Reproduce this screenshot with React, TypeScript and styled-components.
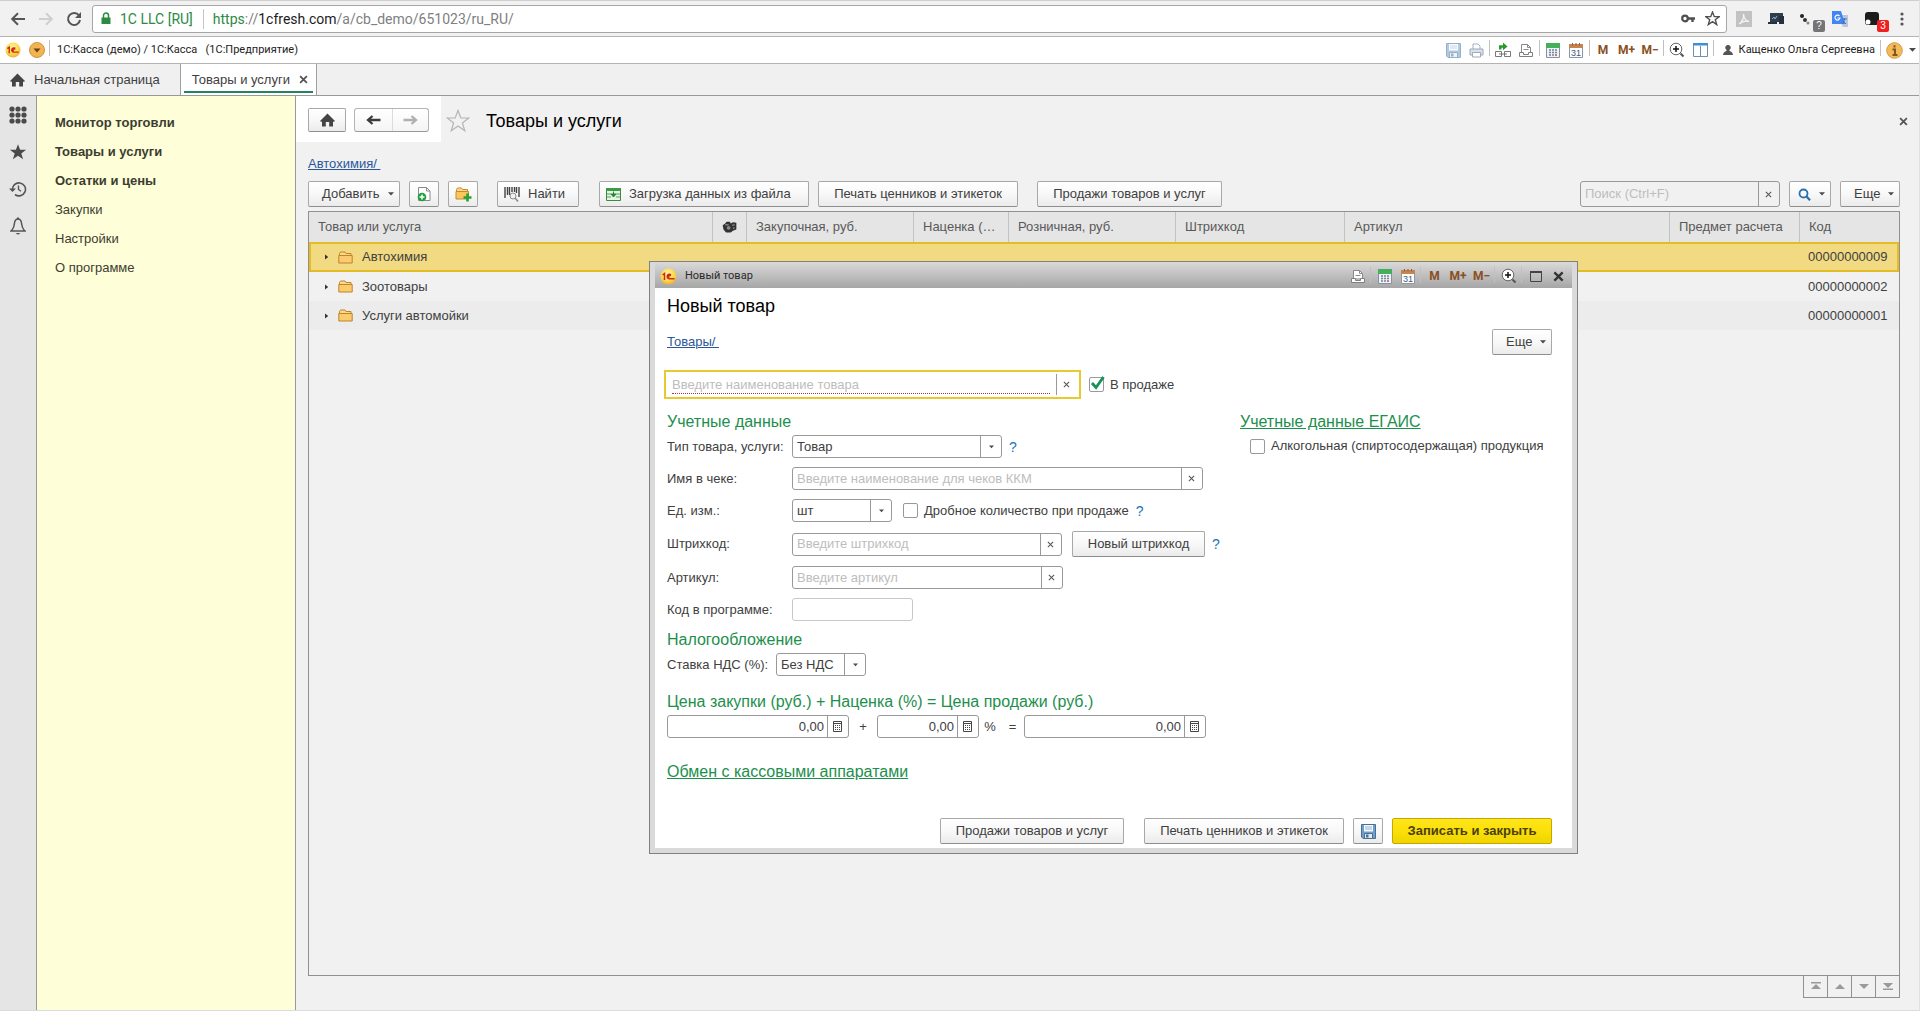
import React from "react";
import styled, { createGlobalStyle, css } from "styled-components";

const Global = createGlobalStyle`
  *, *::before, *::after { box-sizing: border-box; }
  body { margin: 0; background: #f1f1f1; font-family: "Liberation Sans", Arial, sans-serif; font-size: 13px; line-height: 16px; color: #404040; }
  button, input, select { font: inherit; color: inherit; margin: 0; }
  h1, h2 { margin: 0; font-weight: normal; }
  svg { display: block; flex: none; }
`;

/* ---------- page frame ---------- */

const Page = styled.div`
  min-height: 100vh;
  display: flex;
  flex-direction: column;
  border-right: 1px solid #e0e0e0;
  border-bottom: 1px solid #dcdcdc;
`;

const BrowserBar = styled.div`
  display: flex;
  align-items: center;
  height: 37px;
  background: #f1f1f1;
  border-top: 1px solid #cfcfcf;
  border-bottom: 1px solid #b4b4b4;
  padding-left: 4px;
`;

const PlainButton = styled.button<{ $w?: number; $h?: number }>`
  display: flex;
  align-items: center;
  justify-content: center;
  flex: none;
  position: relative;
  width: ${(p) => p.$w ?? 23}px;
  height: ${(p) => p.$h ?? 24}px;
  padding: 0;
  border: 0;
  background: transparent;
`;

const AddressBar = styled.div`
  flex: 1;
  display: flex;
  align-items: center;
  height: 28px;
  margin-left: 4px;
  padding: 0 1px 0 8px;
  background: #fff;
  border: 1px solid #a6a6a6;
  border-radius: 3px;
  font-family: Roboto, "Noto Sans", sans-serif;
  font-size: 14px;
  line-height: 20px;
`;

const Issuer = styled.span`
  color: #2c8a43;
  padding: 0 10px 0 9px;
  border-right: 1px solid #c4c4c4;
  margin-right: 9px;
`;

const Address = styled.span`
  flex: 1;
  color: #808080;
  b { font-weight: normal; color: #1c1c1c; }
  i { font-style: normal; color: #2c8a43; }
`;

const Extensions = styled.div`
  display: flex;
  margin: 0 3px 0 1px;
`;

const CountBadge = styled.span<{ $bg: string }>`
  position: absolute;
  right: -1px;
  bottom: -1px;
  width: 12px;
  height: 12px;
  border-radius: 2px;
  background: ${(p) => p.$bg};
  color: #fff;
  font-size: 10px;
  line-height: 12px;
  text-align: center;
`;

const AppBar = styled.div`
  display: flex;
  align-items: center;
  height: 27px;
  background: #fff;
  border-bottom: 1px solid #b4b4b4;
  font-family: Roboto, "Noto Sans", sans-serif;
  font-size: 11px;
  color: #222;
`;

const AppName = styled.span`
  flex: 1;
  white-space: pre;
`;

const Separator = styled.span<{ $after?: number }>`
  flex: none;
  align-self: flex-start;
  width: 1px;
  height: 16px;
  margin: 3px ${(p) => p.$after ?? 2}px 0 1px;
  background: #c0c0c0;
`;

const UserButton = styled(PlainButton)`
  width: auto;
  gap: 6px;
  padding: 0 4px 0 7px;
`;

const MemoryLabel = styled.span`
  font-family: Roboto, sans-serif;
  font-weight: 700;
  font-size: 12px;
  line-height: 16px;
  color: #8a4f22;
`;

const TabBar = styled.nav`
  display: flex;
  height: 32px;
  border-bottom: 1px solid #999;
  background: #f0f0f0;
`;

const Tab = styled.button<{ $active?: boolean }>`
  display: flex;
  align-items: center;
  height: 31px;
  border: 0;
  border-right: 1px solid #a0a0a0;
  gap: 9px;
  padding: 0 20px 0 10px;
  background: ${(p) => (p.$active ? "#fff" : "transparent")};
  ${(p) =>
    p.$active &&
    css`
      gap: 9px;
      padding: 0 8px 0 11px;
      box-shadow: inset 3px 0 #fff, inset -3px 0 #fff, inset 0 -2px #fff, inset 0 -4px #23835a;
    `}
`;

const Body = styled.div`
  flex: 1;
  display: flex;
`;

const IconRail = styled.nav`
  width: 37px;
  display: flex;
  flex-direction: column;
  align-items: center;
  gap: 13px;
  padding-top: 7px;
  background: #e5e5e5;
  border-right: 1px solid #999;
`;

const Menu = styled.nav`
  width: 259px;
  padding: 12px 18px;
  background: #feffd8;
  border-right: 1px solid #999;
`;

const MenuLink = styled.a<{ $strong?: boolean }>`
  display: block;
  line-height: 29px;
  color: #3c3c30;
  text-decoration: none;
  font-weight: ${(p) => (p.$strong ? 700 : 400)};
`;

/* ---------- goods list ---------- */

const Main = styled.main`
  position: relative;
  flex: 1;
  min-width: 0;
  display: flex;
  flex-direction: column;
  background: #f1f1f1;
`;

const PageHead = styled.header`
  display: flex;
  align-items: center;
  height: 50px;
  padding-right: 4px;
`;

const NavBlock = styled.div`
  display: flex;
  gap: 8px;
  align-self: flex-start;
  height: 46px;
  padding: 12px 12px 0;
  background: #fff;
`;

const Button = styled.button<{ $w?: number; $h?: number; $primary?: boolean; $menu?: boolean; $start?: boolean; $inset?: number }>`
  display: flex;
  align-items: center;
  justify-content: ${(p) => (p.$menu ? "space-between" : p.$start ? "flex-start" : "center")};
  gap: ${(p) => (p.$menu ? 2 : 8)}px;
  flex: none;
  width: ${(p) => (p.$w ? p.$w + "px" : "auto")};
  height: ${(p) => p.$h ?? 26}px;
  padding: 0 ${(p) => (p.$menu ? 5 : 4)}px 0 ${(p) => p.$inset ?? (p.$menu ? 13 : p.$start ? 6 : 4)}px;
  white-space: nowrap;
  border: 1px solid #a8a8a8;
  border-bottom-color: #8e8e8e;
  border-radius: 2px;
  background: linear-gradient(#fff, #f8f8f8 50%, #ebebeb);
  ${(p) =>
    p.$primary &&
    css`
      font-weight: 700;
      color: #4a4010;
      border-color: #c4a800;
      background: linear-gradient(#ffe51c, #fbdf08 50%, #f0d400);
    `}
`;

const NavPair = styled.div`
  display: flex;
  height: 24px;
  border: 1px solid #b4b4b4;
  border-bottom-color: #999;
  border-radius: 3px;
  background: linear-gradient(#fff, #f4f4f4);
  button + button { border-left: 1px solid #dcdcdc; }
`;

const Title = styled.h1`
  flex: 1;
  font-size: 18px;
  line-height: 24px;
  color: #000;
`;

const PathLink = styled.a`
  color: #2b579a;
  text-decoration: underline;
  white-space: pre;
`;

const PathRow = styled.div`
  padding: 10px 12px 9px;
`;

const Toolbar = styled.div`
  display: flex;
  align-items: center;
  gap: 9px;
  padding: 0 19px 4px 12px;
`;

const Gap = styled.span<{ $w?: number }>`
  flex: ${(p) => (p.$w ? "none" : 1)};
  width: ${(p) => p.$w ?? 0}px;
`;

const ListFrame = styled.div`
  flex: 1;
  margin: 0 19px 0 12px;
  border: 1px solid #909090;
`;

const Table = styled.table`
  width: 100%;
  table-layout: fixed;
  border-collapse: separate;
  border-spacing: 0;
`;

const Th = styled.th`
  height: 30px;
  padding: 0 9px;
  font-weight: 400;
  text-align: left;
  color: #595959;
  background: #e5e5e5;
  white-space: nowrap;
  overflow: hidden;
  text-overflow: ellipsis;
  border-right: 1px solid #c2c2c2;
  &:last-child { border-right: 0; }
`;

const Tr = styled.tr<{ $selected?: boolean; $shade?: boolean }>`
  td {
    height: 29px;
    padding: 0 8px;
    white-space: nowrap;
    background: ${(p) => (p.$shade ? "#ececec" : "#f1f1f1")};
    ${(p) =>
      p.$selected &&
      css`
        height: 30px;
        background: #f2da82;
        border-top: 2px solid #e3bc26;
        border-bottom: 2px solid #e3bc26;
        &:first-child { border-left: 2px solid #e3bc26; padding-left: 6px; }
        &:last-child { border-right: 2px solid #e3bc26; }
      `}
  }
`;

const NameCell = styled.span`
  display: flex;
  align-items: center;
  gap: 9px;
  padding-left: 8px;
`;

const ListFoot = styled.footer`
  display: flex;
  justify-content: flex-end;
  padding: 0 19px 12px 0;
`;

const PageButton = styled.button`
  display: grid;
  place-items: center;
  width: 24px;
  height: 22px;
  padding: 0;
  background: #f1f1f1;
  border: 1px solid #909090;
  border-top: 0;
  border-right: 0;
  &:last-child { width: 25px; border-right: 1px solid #909090; }
`;

/* ---------- form fields ---------- */

const Field = styled.div<{ $w: number; $h?: number; $plain?: boolean; $clear?: boolean }>`
  display: flex;
  flex: none;
  width: ${(p) => p.$w}px;
  height: ${(p) => p.$h ?? 23}px;
  border: 1px solid ${(p) => (p.$plain ? "#c8c8c8" : "#999")};
  border-radius: 3px;
  background: ${(p) => (p.$clear ? "transparent" : "#fff")};
`;

const TextInput = styled.input<{ $right?: boolean }>`
  flex: 1;
  min-width: 0;
  width: 100%;
  padding: 0 3px 0 4px;
  border: 0;
  outline: 0;
  background: transparent;
  text-align: ${(p) => (p.$right ? "right" : "left")};
  &::placeholder { color: #bdbdbd; opacity: 1; }
`;

const FieldButton = styled.button`
  display: grid;
  place-items: center;
  flex: none;
  width: 21px;
  padding: 0 1px 0 0;
  border: 0;
  border-left: 1px solid #999;
  background: transparent;
`;

const NameField = styled.div`
  display: flex;
  align-items: center;
  width: 417px;
  height: 29px;
  padding: 0 2px 0 6px;
  border: 2px solid #e8c92e;
  background: #fff;
  input { height: 18px; padding: 0; margin-right: 6px; border-bottom: 1px dotted #b0304a; }
  button { height: 21px; }
`;

const SelectBox = styled.span<{ $w: number }>`
  display: grid;
  flex: none;
  width: ${(p) => p.$w}px;
  height: 23px;
  border: 1px solid #999;
  border-radius: 3px;
  background: #fff;
  > * { grid-area: 1 / 1; }
`;

const Select = styled.select`
  appearance: none;
  width: 100%;
  height: 21px;
  padding: 0 22px 0 4px;
  border: 0;
  outline: 0;
  background: transparent;
`;

const SelectArrow = styled.span`
  justify-self: end;
  display: grid;
  place-items: center;
  width: 21px;
  border-left: 1px solid #999;
  pointer-events: none;
`;

const CheckLabel = styled.label`
  display: flex;
  align-items: center;
  gap: 6px;
`;

const CheckWrap = styled.span`
  display: grid;
  width: 15px;
  height: 15px;
  > * { grid-area: 1 / 1; }
  svg { display: none; pointer-events: none; overflow: visible; }
  input:checked + svg { display: block; }
`;

const CheckInput = styled.input`
  appearance: none;
  width: 15px;
  height: 15px;
  border: 1px solid #999;
  border-radius: 2px;
  background: #fff;
`;

/* ---------- dialog window ---------- */

const Window = styled.section`
  position: absolute;
  left: 353px;
  top: 165px;
  width: 929px;
  border: 1px solid #808080;
  padding: 0 5px 5px;
  background: #dadada;
`;

const WindowBar = styled.header`
  display: flex;
  align-items: center;
  height: 26px;
  padding: 2px 2px 0 5px;
  background: linear-gradient(#dadada, #cacaca 30%, #a6a6a6);
  font-family: Roboto, "Noto Sans", sans-serif;
  font-size: 11px;
  color: #2a2a2a;
`;

const WindowName = styled.span`
  flex: 1;
  padding-left: 8px;
`;

const WindowBody = styled.div`
  padding: 6px 20px 4px 12px;
  background: #fff;
`;

const Between = styled.div`
  display: flex;
  justify-content: space-between;
  align-items: center;
  margin: 11px 0 15px;
`;

const NameRow = styled.div`
  display: flex;
  align-items: center;
  gap: 8px;
  margin: 0 0 13px -3px;
`;

const Columns = styled.div`
  display: flex;
  justify-content: space-between;
  align-items: flex-start;
`;

const SideColumn = styled.div`
  width: 312px;
`;

const Heading = styled.h2<{ $top?: number }>`
  margin: ${(p) => p.$top ?? 0}px 0 3px;
  font-size: 16px;
  line-height: 20px;
  color: #1d8f4d;
  a { color: inherit; }
`;

const FormRows = styled.div`
  display: flex;
  flex-direction: column;
  gap: 9px;
`;

const Row = styled.div`
  display: flex;
  align-items: center;
`;

const RowLabel = styled.label<{ $w?: number }>`
  flex: none;
  width: ${(p) => p.$w ?? 125}px;
`;

const Help = styled.a`
  margin-left: 7px;
  color: #1e73b8;
  text-decoration: none;
  font-size: 14px;
`;

const Sign = styled.span<{ $w: number }>`
  width: ${(p) => p.$w}px;
  text-align: center;
`;

const Indent = styled.div`
  padding: 3px 0 0 10px;
`;

const WindowActions = styled.footer`
  display: flex;
  justify-content: flex-end;
  gap: 9px;
  margin-top: 36px;
`;

/* ---------- drawings ---------- */

const Logo = ({ size = 17 }: { size?: number }) => (
  <svg width={size} height={size} viewBox="0 0 17 17" aria-hidden>
    <defs>
      <radialGradient id="sun" cx="45%" cy="35%" r="65%">
        <stop offset="0" stopColor="#fff8b0" />
        <stop offset=".6" stopColor="#fcdc4e" />
        <stop offset="1" stopColor="#eeb03a" />
      </radialGradient>
    </defs>
    <circle cx="8.500" cy="8.500" r="8" fill="url(#sun)" />
    <path d="M2.500 7l2-1.500v6.500M11 6.800a2.300 2.300 0 1 0-1.800 4H14.500M10.500 8.200a1 1 0 1 0-1 1" fill="none" stroke="#cf2a14" strokeWidth="1.500" />
  </svg>
);

const Caret = ({ size = 6 }: { size?: number }) => (
  <svg width={size} height="4" viewBox="0 0 7 4" aria-hidden><path d="M0 0h7L3.500 3.800z" fill="#4a4a4a" /></svg>
);

const Cross = ({ size = 7, w = 1.2, color = "#555" }: { size?: number; w?: number; color?: string }) => (
  <svg width={size} height={size} viewBox="0 0 8 8" aria-hidden><path d="M1 1l6 6M7 1L1 7" stroke={color} strokeWidth={w} /></svg>
);

const House = () => (
  <svg width="15" height="14" viewBox="0 0 15 14" aria-hidden><path d="M7.500.5L15 8l-1.200 1L13 8.300V13.500H9.200V9H5.800v4.500H2V8.300L1.200 9 0 8z" fill="#444" /></svg>
);

const Arrow = ({ flip, color }: { flip?: boolean; color: string }) => (
  <svg width="16" height="14" viewBox="0 0 16 14" aria-hidden>
    <g transform={flip ? "matrix(-1 0 0 1 16 0)" : undefined}>
      <path d="M15 7H2.500M8 1.300L2.200 7 8 12.700" fill="none" stroke={color} strokeWidth="2" />
    </g>
  </svg>
);

const NavArrow = ({ flip, color }: { flip?: boolean; color: string }) => (
  <svg width="15" height="10" viewBox="0 0 15 10" aria-hidden>
    <g transform={flip ? "matrix(-1 0 0 1 15 0)" : undefined}>
      <path d="M14.500 5H2.500M6.500 1L2 5l4.500 4" fill="none" stroke={color} strokeWidth="2.300" />
    </g>
  </svg>
);

const Star = ({ size, fill = "none", stroke = "none", w = 1 }: { size: number; fill?: string; stroke?: string; w?: number }) => (
  <svg width={size} height={size} viewBox="0 0 24 24" aria-hidden>
    <path d="M12 1.500l2.800 7.500h8l-6.400 4.900 2.400 7.900-6.800-4.800-6.800 4.800 2.400-7.900L1.200 9h8z" fill={fill} stroke={stroke} strokeWidth={w} />
  </svg>
);

const Disk = ({ faded }: { faded?: boolean }) => (
  <svg width="15" height="15" viewBox="0 0 15 15" opacity={faded ? 0.55 : 1} aria-hidden>
    <path d="M.5.500h14v14h-12.500l-1.500-1.500z" fill="#6f9fcb" stroke="#4a6f95" />
    <path d="M3 1h9v6.500H3z" fill="#f4f8fc" />
    <path d="M4 3h7M4 5h7" stroke="#9ab4cc" />
    <path d="M3.500 9.500h8v5h-8z" fill="#e2eaf2" stroke="#4a6f95" />
    <path d="M5 10.500h2.500v3H5z" fill="#4a6f95" />
  </svg>
);

const Printer = () => (
  <svg width="15" height="15" viewBox="0 0 15 15" opacity=".7" aria-hidden>
    <path d="M4 6V1h5l2 2v3" fill="#fff" stroke="#7f90a8" />
    <path d="M1 6h13v6H1z" fill="#c9d3e2" stroke="#76869d" />
    <path d="M3.500 9.500h8v4.500h-8z" fill="#fff" stroke="#76869d" />
  </svg>
);

const Preview = () => (
  <svg width="16" height="15" viewBox="0 0 16 15" aria-hidden>
    <path d="M3.500 9V1.500h6l3 3V9" fill="#fff" stroke="#8a8a8a" />
    <path d="M9.500 1.500v3h3M5.500 6.500h5" fill="none" stroke="#8a8a8a" />
    <path d="M1.500 9.500h4v2h5v-2h4v4h-13z" fill="#fff" stroke="#808080" />
  </svg>
);

const LinkOut = () => (
  <svg width="16" height="16" viewBox="0 0 16 16" aria-hidden>
    <path d="M.5 9.500h6v5h-6zM9.500 9.500h6v5h-6zM4 12h8" fill="#fff" stroke="#777" />
    <path d="M4 7.500V3.200h4V.5l4.500 4L8 8.200V5.800H6.500V7.500z" fill="#2a9a2e" />
  </svg>
);

const Calculator = () => (
  <svg width="14" height="15" viewBox="0 0 14 15" aria-hidden>
    <path d="M.5.500h13v14H.5z" fill="#eef1f5" stroke="#8492a5" />
    <path d="M0 0h14v5H0z" fill="#45b05c" />
    <path d="M3 7h2M6 7h2M9 7h2M3 9.500h2M6 9.500h2M9 9.500h2M3 12h2M6 12h2" stroke="#77839a" strokeWidth="1.500" />
    <path d="M9 12h2" stroke="#d04c3c" strokeWidth="1.500" />
  </svg>
);

const Calendar = () => (
  <svg width="14" height="15" viewBox="0 0 14 15" aria-hidden>
    <path d="M.5 2.500h13v12H.5z" fill="#fff" stroke="#8c97a8" />
    <path d="M0 1h14v4H0z" fill="#c78350" />
    <path d="M3.500 0v2.500M7 0v2.500M10.500 0v2.500" stroke="#8d5c38" />
    <text x="7" y="13" textAnchor="middle" fontSize="9" fontFamily="Liberation Sans" fill="#3f5878">31</text>
  </svg>
);

const ZoomPlus = () => (
  <svg width="16" height="16" viewBox="0 0 16 16" aria-hidden>
    <circle cx="7" cy="7" r="5.800" fill="#fff" stroke="#666" />
    <path d="M7 4v6M4 7h6" stroke="#111" strokeWidth="1.500" />
    <path d="M11.500 11.500l3 3" stroke="#555" strokeWidth="2" />
  </svg>
);

const Panels = () => (
  <svg width="15" height="14" viewBox="0 0 15 14" aria-hidden>
    <path d="M.5.500h14v13H.5zM7.500 3v11" fill="#fff" stroke="#7290b0" />
    <path d="M0 0h15v2.500H0z" fill="#3f8fd6" />
  </svg>
);

const Folder = () => (
  <svg width="15" height="13" viewBox="0 0 15 13" aria-hidden>
    <path d="M1.500 11V2.500l1-1.500H7l1 1.500h5V11" fill="#f9d98b" stroke="#c08326" />
    <path d="M.8 4.500h13.400v7.500H.8z" fill="#fbcb70" stroke="#c08326" />
  </svg>
);

const Loupe = () => (
  <svg width="13" height="13" viewBox="0 0 13 13" aria-hidden>
    <circle cx="5.500" cy="5.500" r="4" fill="none" stroke="#2a6fb0" strokeWidth="1.800" />
    <path d="M8.500 8.500l3.500 3.800" stroke="#2a6fb0" strokeWidth="2.200" />
  </svg>
);

const CalcGrid = () => (
  <svg width="9" height="11" viewBox="0 0 9 11" aria-hidden>
    <path d="M.5.500h8v10h-8zM.5 2.500h8" fill="none" stroke="#444" />
    <path d="M2 4.500h5M2 6.500h5M2 8.500h5" stroke="#444" strokeDasharray="1 1" />
  </svg>
);

const MemoryKeys = () => (
  <>
    <PlainButton><MemoryLabel>M</MemoryLabel></PlainButton>
    <PlainButton $w={24}><MemoryLabel>M+</MemoryLabel></PlainButton>
    <PlainButton><MemoryLabel>M−</MemoryLabel></PlainButton>
  </>
);

/* ---------- reusable controls ---------- */

type ClearProps = { id: string; w: number; placeholder: string };
const ClearableField = ({ id, w, placeholder }: ClearProps) => (
  <Field $w={w}>
    <TextInput id={id} placeholder={placeholder} />
    <FieldButton aria-label="Очистить"><Cross /></FieldButton>
  </Field>
);

const Dropdown = ({ id, w, value }: { id: string; w: number; value: string }) => (
  <SelectBox $w={w}>
    <Select id={id} defaultValue={value}><option>{value}</option></Select>
    <SelectArrow><Caret size={5} /></SelectArrow>
  </SelectBox>
);

const AmountField = ({ w, label }: { w: number; label: string }) => (
  <Field $w={w}>
    <TextInput $right aria-label={label} defaultValue="0,00" />
    <FieldButton aria-label="Калькулятор"><CalcGrid /></FieldButton>
  </Field>
);

const Check = ({ children, checked }: { children: React.ReactNode; checked?: boolean }) => (
  <CheckLabel>
    <CheckWrap>
      <CheckInput type="checkbox" defaultChecked={checked} />
      <svg width="15" height="15" viewBox="0 0 15 15"><path d="M3 6l4 4.500L14.500 0" fill="none" stroke="#159257" strokeWidth="2.800" /></svg>
    </CheckWrap>
    {children}
  </CheckLabel>
);

/* ---------- data ---------- */

const menu = [
  ["Монитор торговли", true],
  ["Товары и услуги", true],
  ["Остатки и цены", true],
  ["Закупки", false],
  ["Настройки", false],
  ["О программе", false],
] as const;

const columns: { title: string; width?: number }[] = [
  { title: "Товар или услуга" },
  { title: "", width: 34 },
  { title: "Закупочная, руб.", width: 167 },
  { title: "Наценка (…", width: 95 },
  { title: "Розничная, руб.", width: 167 },
  { title: "Штрихкод", width: 169 },
  { title: "Артикул", width: 325 },
  { title: "Предмет расчета", width: 130 },
  { title: "Код", width: 99 },
];

const rows = [
  { name: "Автохимия", code: "00000000009" },
  { name: "Зоотовары", code: "00000000002" },
  { name: "Услуги автомойки", code: "00000000001" },
];

/* ---------- sections ---------- */

const Browser = () => (
  <BrowserBar>
    <PlainButton $w={28} aria-label="Назад"><Arrow color="#555" /></PlainButton>
    <PlainButton $w={28} aria-label="Вперед"><Arrow flip color="#cfcfcf" /></PlainButton>
    <PlainButton $w={28} aria-label="Обновить">
      <svg width="16" height="16" viewBox="0 0 16 16"><path d="M13 4.500A6 6 0 1 0 14 9" fill="none" stroke="#555" strokeWidth="2" /><path d="M15 1v6H9z" fill="#555" /></svg>
    </PlainButton>
    <AddressBar>
      <svg width="10" height="13" viewBox="0 0 10 13"><path d="M2.500 6V3.500a2.500 2.500 0 0 1 5 0V6" fill="none" stroke="#2c8a43" strokeWidth="1.500" /><path d="M.5 5.500h9V12h-9z" fill="#2c8a43" /></svg>
      <Issuer>1C LLC [RU]</Issuer>
      <Address><i>https</i>://<b>1cfresh.com</b>/a/cb_demo/651023/ru_RU/</Address>
      <PlainButton $w={25} aria-label="Пароли">
        <svg width="14" height="9" viewBox="0 0 14 9"><circle cx="4" cy="4.500" r="2.800" fill="none" stroke="#505050" strokeWidth="2.200" /><path d="M7 4.500h7M11.500 4.500v3.500" stroke="#505050" strokeWidth="2.400" /></svg>
      </PlainButton>
      <PlainButton $w={25} aria-label="В закладки"><Star size={15} stroke="#505050" w={2.2} /></PlainButton>
    </AddressBar>
    <Extensions>
      <PlainButton $w={32} aria-label="PDF">
        <svg width="16" height="16" viewBox="0 0 16 16"><path d="M0 0h16v16H0z" fill="#c2c2c2" /><path d="M3 13c3-2 5-6 4.500-10C8 8 10 10 13 10.500 9 9.500 6 10.500 3 13z" fill="none" stroke="#f4f4f4" strokeWidth="1.300" /></svg>
      </PlainButton>
      <PlainButton $w={32} aria-label="Устройства">
        <svg width="16" height="13" viewBox="0 0 16 13"><path d="M2 1h13v9H2z" fill="#2f3c4a" /><path d="M0 10h9v2H0zM11 4h5v8h-5z" fill="#24303c" /><path d="M4 7l2-2 1 2 2-3" fill="none" stroke="#7fb2de" /></svg>
      </PlainButton>
      <PlainButton $w={32} aria-label="Расширение">
        <svg width="16" height="14" viewBox="0 0 16 14"><circle cx="2" cy="4" r="2" fill="#222" /><circle cx="5" cy="8" r="2" fill="#333" /><circle cx="8" cy="11" r="1.500" fill="#888" /></svg>
        <CountBadge $bg="#757575">?</CountBadge>
      </PlainButton>
      <PlainButton $w={32} aria-label="Переводчик">
        <svg width="16" height="16" viewBox="0 0 16 16"><path d="M5 4h11v12h-5z" fill="#b9c8de" /><path d="M0 0h9l4 13H0z" fill="#4285f4" /><path d="M7.500 5A2.500 2.500 0 1 0 8 7H5.500" fill="none" stroke="#fff" strokeWidth="1.200" /><path d="M10 8h5M12.500 7v1c0 2-1 4-2.500 5M11 10l3 3" stroke="#4a6fb0" fill="none" /></svg>
      </PlainButton>
      <PlainButton $w={32} aria-label="Скрипты">
        <svg width="16" height="16" viewBox="0 0 16 16"><rect x="1" y="1" width="14" height="13" rx="3" fill="#1c1c1c" /><circle cx="4" cy="11" r="2.500" fill="#fff" /></svg>
        <CountBadge $bg="#f02020">3</CountBadge>
      </PlainButton>
      <PlainButton $w={28} aria-label="Меню">
        <svg width="4" height="14" viewBox="0 0 4 14"><g fill="#555"><circle cx="2" cy="2" r="1.600" /><circle cx="2" cy="7" r="1.600" /><circle cx="2" cy="12" r="1.600" /></g></svg>
      </PlainButton>
    </Extensions>
  </BrowserBar>
);

const ApplicationBar = () => (
  <AppBar>
    <PlainButton $w={25} aria-label="1С"><Logo size={16} /></PlainButton>
    <PlainButton aria-label="Главное меню">
      <svg width="16" height="16" viewBox="0 0 16 16"><circle cx="8" cy="8" r="7.500" fill="#f0b452" stroke="#d2953a" /><path d="M4.500 6.500h7L8 10.500z" fill="#6e3c10" /></svg>
    </PlainButton>
    <Separator $after={7} />
    <AppName>1С:Касса (демо) / 1С:Касса   (1С:Предприятие)</AppName>
    <PlainButton aria-label="Сохранить"><Disk faded /></PlainButton>
    <PlainButton aria-label="Печать"><Printer /></PlainButton>
    <Separator />
    <PlainButton aria-label="Ссылка"><LinkOut /></PlainButton>
    <PlainButton aria-label="Просмотр"><Preview /></PlainButton>
    <Separator />
    <PlainButton aria-label="Калькулятор"><Calculator /></PlainButton>
    <PlainButton aria-label="Календарь"><Calendar /></PlainButton>
    <Separator />
    <MemoryKeys />
    <Separator />
    <PlainButton aria-label="Масштаб"><ZoomPlus /></PlainButton>
    <PlainButton aria-label="Панели"><Panels /></PlainButton>
    <Separator />
    <UserButton>
      <svg width="10" height="10" viewBox="0 0 10 10"><path d="M5 0a2.600 2.600 0 0 1 1.500 4.800V6c2 .3 3 1.500 3.500 4H0c.5-2.500 1.500-3.700 3.500-4V4.800A2.600 2.600 0 0 1 5 0z" fill="#555" /></svg>
      Кащенко Ольга Сергеевна
    </UserButton>
    <Separator />
    <PlainButton aria-label="О программе">
      <svg width="17" height="17" viewBox="0 0 17 17"><circle cx="8.500" cy="8.500" r="7.800" fill="#f3b95a" stroke="#d59b3d" /><path d="M8.500 3.200v2.200M6.500 7.500h2.500v5.500M6.500 13h5" stroke="#7a5a1e" strokeWidth="2" fill="none" /></svg>
    </PlainButton>
    <PlainButton $w={13} aria-label="Еще"><Caret size={7} /></PlainButton>
  </AppBar>
);

const Rail = () => (
  <IconRail>
    <PlainButton aria-label="Разделы">
      <svg width="18" height="18" viewBox="0 0 18 18"><g fill="#4a4a4a">{[3, 9, 15].map((y) => [3, 9, 15].map((x) => <circle key={x + "-" + y} cx={x} cy={y} r="2.600" />))}</g></svg>
    </PlainButton>
    <PlainButton aria-label="Избранное"><Star size={18} fill="#4a4a4a" /></PlainButton>
    <PlainButton aria-label="История">
      <svg width="18" height="16" viewBox="0 0 18 16"><path d="M3.500 9a6.500 6.500 0 1 1 2.500 4.500" fill="none" stroke="#555" strokeWidth="1.600" /><path d="M0 7.500h7L3.500 11z" fill="#555" /><path d="M9.500 4.500V8.500l2.500 1.800" fill="none" stroke="#555" strokeWidth="1.400" /></svg>
    </PlainButton>
    <PlainButton aria-label="Оповещения">
      <svg width="16" height="18" viewBox="0 0 16 18"><path d="M1 14c2.500-2 3-4 3.500-8 .3-2 1.500-4 3.500-4s3.200 2 3.500 4c.5 4 1 6 3.500 8z" fill="none" stroke="#555" strokeWidth="1.500" /><path d="M5.500 16h5L8 17.800zM7 .500h2v2H7z" fill="#555" /></svg>
    </PlainButton>
  </IconRail>
);

const ListToolbar = () => (
  <Toolbar>
    <Button $w={92} $menu>Добавить <Caret /></Button>
    <Button $w={30} aria-label="Создать">
      <svg width="14" height="16" viewBox="0 0 14 16"><path d="M1.500 1.500h8l3.500 3.500v9.500H1.500z" fill="#fff" stroke="#8a8a8a" /><path d="M9.500 1.500V5H13" fill="none" stroke="#8a8a8a" /><circle cx="5" cy="11" r="4.300" fill="#1f9e3e" /><path d="M5 8.500v5M2.500 11h5" stroke="#fff" strokeWidth="1.500" /></svg>
    </Button>
    <Button $w={30} aria-label="Создать группу">
      <svg width="17" height="15" viewBox="0 0 17 15"><path d="M1.500 11.500V2.500l1-1.500H6.500l1 1.500h5v9z" fill="#f9d98b" stroke="#c98a2c" /><path d="M1 4.500h12.500v7.500H1z" fill="#fbc65c" stroke="#c98a2c" /><path d="M12.500 6.500v8M8.500 10.500h8" stroke="#27a336" strokeWidth="2.600" /></svg>
    </Button>
    <Gap $w={1} />
    <Button $w={82} $start>
      <svg width="16" height="15" viewBox="0 0 16 15"><path d="M1 0v11M3.500 0v8M5.500 0v8M8 0v5M10.500 0v5M12.500 0v6M15 0v10" stroke="#444" strokeWidth="1.400" /><circle cx="9" cy="9" r="3" fill="#eef2f6" stroke="#8a8a8a" /><path d="M11 11l3 3.500" stroke="#8a8a8a" strokeWidth="1.600" /></svg>
      Найти
    </Button>
    <Gap $w={2} />
    <Button $w={210} $start>
      <svg width="15" height="13" viewBox="0 0 15 13"><path d="M.5.500h14v12H.5z" fill="#e6f5e4" stroke="#3c8a42" /><path d="M0 0h15v3H0z" fill="#3c9a46" /><path d="M1 6h4M10 6h4M1 9h4M10 9h4" stroke="#5a9a5e" /><path d="M7.500 3.500v4M5 6l2.500 3L10 6z" stroke="#1f8a2c" fill="#1f8a2c" /></svg>
      Загрузка данных из файла
    </Button>
    <Button $w={200}>Печать ценников и этикеток</Button>
    <Gap $w={1} />
    <Button $w={185}>Продажи товаров и услуг</Button>
    <Gap />
    <Field $w={200} $h={26} $clear>
      <TextInput aria-label="Поиск" placeholder="Поиск (Ctrl+F)" />
      <FieldButton aria-label="Очистить"><Cross /></FieldButton>
    </Field>
    <Button $w={42} $menu $inset={8} aria-label="Найти в списке"><Loupe /><Caret /></Button>
    <Button $w={60} $menu>Еще <Caret /></Button>
  </Toolbar>
);

const GoodsTable = () => (
  <Table>
    <colgroup>{columns.map((c, i) => <col key={i} width={c.width} />)}</colgroup>
    <thead>
      <tr>
        {columns.map((c, i) => (
          <Th key={i} scope="col">
            {c.title || (
              <svg width="15" height="12" viewBox="0 0 16 14" aria-label="Изображение"><path d="M0 5l3-2 1.500-2h4L9.500 3 12 1.500 16 2v8l-4 1.500-2.500 2H4L1 10z" fill="#333" /><circle cx="7" cy="8" r="2.200" fill="#8a8a8a" /><path d="M3 4.500h4M11 5l3-.5M12 8.500l2-.5" stroke="#bbb" /></svg>
            )}
          </Th>
        ))}
      </tr>
    </thead>
    <tbody>
      {rows.map((r, i) => (
        <Tr key={r.code} $selected={i === 0} $shade={i === 2}>
          <td>
            <NameCell>
              <svg width="4" height="6" viewBox="0 0 4 6"><path d="M0 .5l3.200 2.500L0 5.500z" fill="#333" /></svg>
              <Folder />
              {r.name}
            </NameCell>
          </td>
          {columns.slice(1, -1).map((_, k) => <td key={k} />)}
          <td>{r.code}</td>
        </Tr>
      ))}
    </tbody>
  </Table>
);

const pageIcons = [
  ["В начало", "M3 0h10v1.500H3zM8 2l5 5H3z"],
  ["Назад", "M8 2l5 5H3z"],
  ["Далее", "M3 2h10L8 7z"],
  ["В конец", "M3 1h10L8 6zM3 6.500h10V8H3z"],
];

const NewItemWindow = () => (
  <Window role="dialog" aria-label="Новый товар">
    <WindowBar>
      <Logo />
      <WindowName>Новый товар</WindowName>
      <PlainButton aria-label="Просмотр"><Preview /></PlainButton>
      <Separator />
      <PlainButton aria-label="Калькулятор"><Calculator /></PlainButton>
      <PlainButton aria-label="Календарь"><Calendar /></PlainButton>
      <Separator />
      <MemoryKeys />
      <Separator />
      <PlainButton aria-label="Масштаб"><ZoomPlus /></PlainButton>
      <Separator />
      <PlainButton aria-label="Развернуть">
        <svg width="12" height="11" viewBox="0 0 12 11"><path d="M.5 1h11v9.500H.5z" fill="none" stroke="#444" /><path d="M0 1h12" stroke="#444" strokeWidth="2" /></svg>
      </PlainButton>
      <PlainButton aria-label="Закрыть"><Cross size={11} w={1.7} color="#333" /></PlainButton>
    </WindowBar>
    <WindowBody>
      <Title>Новый товар</Title>
      <Between>
        <PathLink href="#goods">{"Товары/ "}</PathLink>
        <Button $w={60} $menu>Еще <Caret /></Button>
      </Between>
      <NameRow>
        <NameField>
          <TextInput aria-label="Наименование" placeholder="Введите наименование товара" />
          <FieldButton aria-label="Очистить"><Cross /></FieldButton>
        </NameField>
        <Check checked>В продаже</Check>
      </NameRow>
      <Columns>
        <div>
          <Heading>Учетные данные</Heading>
          <FormRows>
            <Row>
              <RowLabel htmlFor="kind">Тип товара, услуги:</RowLabel>
              <Dropdown id="kind" w={210} value="Товар" />
              <Help href="#kind">?</Help>
            </Row>
            <Row>
              <RowLabel htmlFor="receipt">Имя в чеке:</RowLabel>
              <ClearableField id="receipt" w={411} placeholder="Введите наименование для чеков ККМ" />
            </Row>
            <Row>
              <RowLabel htmlFor="unit">Ед. изм.:</RowLabel>
              <Dropdown id="unit" w={100} value="шт" />
              <Gap $w={11} />
              <Check>Дробное количество при продаже</Check>
              <Help href="#unit">?</Help>
            </Row>
            <Row>
              <RowLabel htmlFor="barcode">Штрихкод:</RowLabel>
              <ClearableField id="barcode" w={270} placeholder="Введите штрихкод" />
              <Gap $w={10} />
              <Button $w={133}>Новый штрихкод</Button>
              <Help href="#barcode">?</Help>
            </Row>
            <Row>
              <RowLabel htmlFor="article">Артикул:</RowLabel>
              <ClearableField id="article" w={271} placeholder="Введите артикул" />
            </Row>
            <Row>
              <RowLabel htmlFor="code">Код в программе:</RowLabel>
              <Field $w={121} $plain><TextInput id="code" /></Field>
            </Row>
          </FormRows>
        </div>
        <SideColumn>
          <Heading><a href="#egais">Учетные данные ЕГАИС</a></Heading>
          <Indent><Check>Алкогольная (спиртосодержащая) продукция</Check></Indent>
        </SideColumn>
      </Columns>
      <Heading $top={9}>Налогообложение</Heading>
      <Row>
        <RowLabel $w={109} htmlFor="vat">Ставка НДС (%):</RowLabel>
        <Dropdown id="vat" w={90} value="Без НДС" />
      </Row>
      <Heading $top={16}>Цена закупки (руб.) + Наценка (%) = Цена продажи (руб.)</Heading>
      <Row>
        <AmountField w={182} label="Цена закупки" />
        <Sign $w={28}>+</Sign>
        <AmountField w={102} label="Наценка" />
        <Sign $w={22}>%</Sign>
        <Sign $w={23}>=</Sign>
        <AmountField w={182} label="Цена продажи" />
      </Row>
      <Heading $top={24}><a href="#exchange">Обмен с кассовыми аппаратами</a></Heading>
      <WindowActions>
        <Button $w={184}>Продажи товаров и услуг</Button>
        <Gap $w={2} />
        <Button $w={200}>Печать ценников и этикеток</Button>
        <Button $w={30} aria-label="Записать"><Disk /></Button>
        <Button $w={160} $primary>Записать и закрыть</Button>
      </WindowActions>
    </WindowBody>
  </Window>
);

export default function App() {
  return (
    <Page>
      <Global />
      <Browser />
      <ApplicationBar />
      <TabBar>
        <Tab><House />Начальная страница</Tab>
        <Tab $active>Товары и услуги <Cross size={9} w={1.6} /></Tab>
      </TabBar>
      <Body>
        <Rail />
        <Menu>
          {menu.map(([text, strong]) => <MenuLink key={text} href="#menu" $strong={strong}>{text}</MenuLink>)}
        </Menu>
        <Main>
          <PageHead>
            <NavBlock>
              <Button $w={38} $h={24} aria-label="Домой"><House /></Button>
              <NavPair>
                <PlainButton $w={37} $h={22} aria-label="Назад"><NavArrow color="#3c3c3c" /></PlainButton>
                <PlainButton $w={36} $h={22} aria-label="Вперед"><NavArrow flip color="#b0b0b0" /></PlainButton>
              </NavPair>
            </NavBlock>
            <PlainButton $w={34} aria-label="В избранное"><Star size={24} stroke="#b4b4b4" w={1.2} /></PlainButton>
            <Gap $w={11} />
            <Title>Товары и услуги</Title>
            <PlainButton aria-label="Закрыть"><Cross size={9} w={1.6} /></PlainButton>
          </PageHead>
          <PathRow><PathLink href="#path">{"Автохимия/ "}</PathLink></PathRow>
          <ListToolbar />
          <ListFrame><GoodsTable /></ListFrame>
          <ListFoot>
            {pageIcons.map(([label, d]) => (
              <PageButton key={label} aria-label={label}>
                <svg width="16" height="9" viewBox="0 0 16 9"><path d={d} fill="#9a9a9a" /></svg>
              </PageButton>
            ))}
          </ListFoot>
          <NewItemWindow />
        </Main>
      </Body>
    </Page>
  );
}
